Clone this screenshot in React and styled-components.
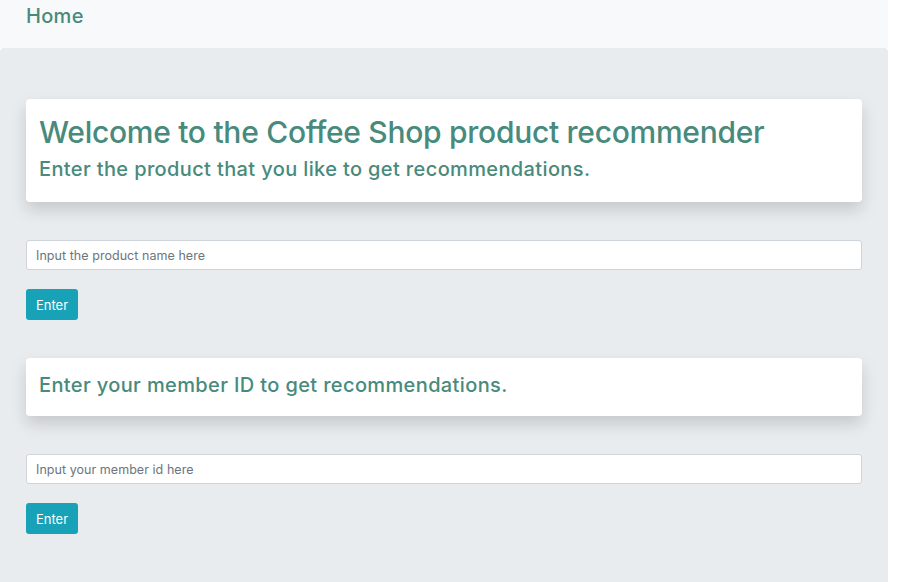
import React from "react";
import styled, { createGlobalStyle } from "styled-components";

const GlobalStyle = createGlobalStyle`
  body {
    margin: 0;
    background: #fff;
    font-family: Inter, "Liberation Sans", Arial, sans-serif;
  }
`;

const Page = styled.div`
  width: 888px;
  height: 582px;
  display: flex;
  flex-direction: column;
`;

const NavBar = styled.nav`
  height: 48px;
  background: #f8f9fa;
  display: flex;
  align-items: flex-start;
  padding: 3px 26px 0;
  box-sizing: border-box;
  a {
    color: #488a7c;
    font-size: 20px;
    font-weight: 500;
    line-height: 26px;
    letter-spacing: 0.3px;
    text-decoration: none;
  }
`;

const Jumbo = styled.main`
  flex: 1;
  background: #e9ecef;
  border-radius: 4px 4px 0 0;
  padding: 51px 26px 0;
  display: flex;
  flex-direction: column;
`;

const Card = styled.div`
  background: #fff;
  border-radius: 4px;
  box-shadow: 0 8px 16px rgba(0, 0, 0, 0.15);
  padding: ${(p) => (p.$tall ? "15px 13px 20px" : "14px 13px 18px")};
  color: #488a7c;
  h1 {
    margin: 0 0 6px;
    font-size: 30px;
    font-weight: 500;
    line-height: 36px;
    letter-spacing: -0.28px;
  }
  h2 {
    margin: 0;
    font-size: 20px;
    font-weight: 500;
    line-height: 26px;
    letter-spacing: 0.37px;
  }
`;

const Input = styled.input`
  margin-top: 38px;
  height: 30px;
  box-sizing: border-box;
  border: 1px solid #ced4da;
  border-radius: 3px;
  background: #fff;
  padding: 0 9px;
  font-family: inherit;
  font-size: 12.5px;
  letter-spacing: 0.05px;
  &::placeholder {
    color: #6c757d;
  }
`;

const Button = styled.button`
  align-self: flex-start;
  margin-top: 19px;
  margin-bottom: 38px;
  width: 52px;
  height: 31px;
  border: none;
  border-radius: 3px;
  background: #17a2b8;
  color: #fff;
  font-family: inherit;
  font-size: 13px;
  padding: 0;
`;

export default function App() {
  return (
    <>
      <GlobalStyle />
      <Page>
        <NavBar>
          <a href="#home">Home</a>
        </NavBar>
        <Jumbo>
          <Card $tall>
            <h1>Welcome to the Coffee Shop product recommender</h1>
            <h2>Enter the product that you like to get recommendations.</h2>
          </Card>
          <Input placeholder="Input the product name here" />
          <Button>Enter</Button>
          <Card>
            <h2>Enter your member ID to get recommendations.</h2>
          </Card>
          <Input placeholder="Input your member id here" />
          <Button>Enter</Button>
        </Jumbo>
      </Page>
    </>
  );
}
